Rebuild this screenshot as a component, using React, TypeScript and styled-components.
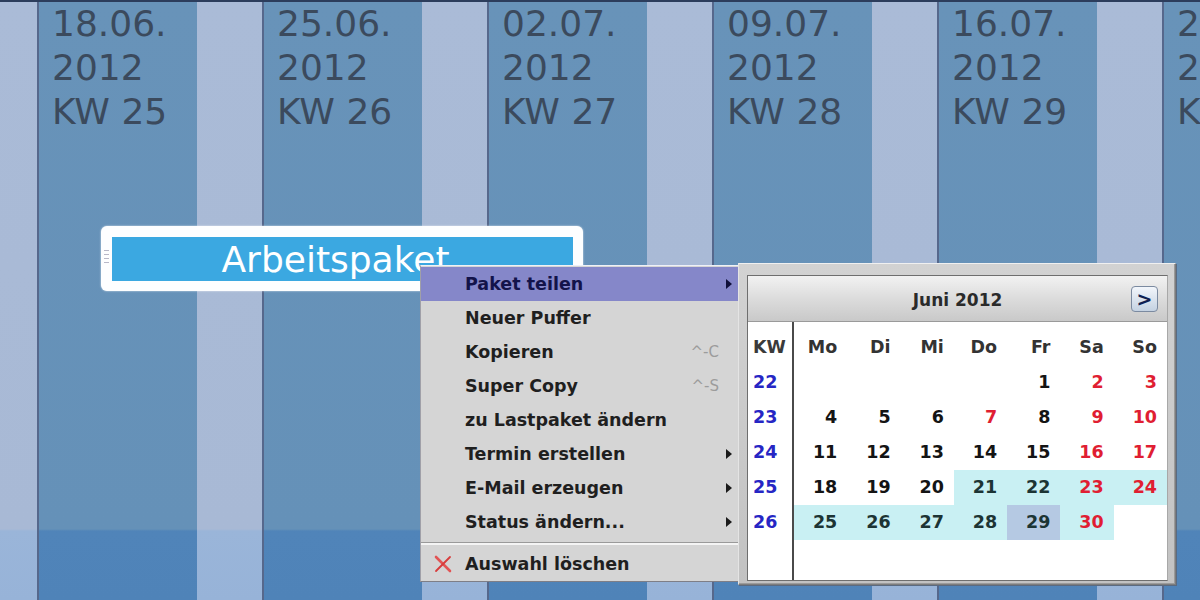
import React from 'react';
import styled, { createGlobalStyle } from 'styled-components';

const GlobalStyle = createGlobalStyle`
  html, body {
    margin: 0;
    padding: 0;
    overflow: hidden;
    background: #6792b8;
  }
`;

// the first week only shows its weekend strip at the left edge
const weeks = [
  { date: '', kw: 24 },
  { date: '18.06.', kw: 25 },
  { date: '25.06.', kw: 26 },
  { date: '02.07.', kw: 27 },
  { date: '09.07.', kw: 28 },
  { date: '16.07.', kw: 29 },
  { date: '23.07.', kw: 30 },
];

type MenuItem = { label: string; shortcut?: string; sub?: boolean; active?: boolean };

const menuItems: MenuItem[] = [
  { label: 'Paket teilen', sub: true, active: true },
  { label: 'Neuer Puffer' },
  { label: 'Kopieren', shortcut: '^-C' },
  { label: 'Super Copy', shortcut: '^-S' },
  { label: 'zu Lastpaket ändern' },
  { label: 'Termin erstellen', sub: true },
  { label: 'E-Mail erzeugen', sub: true },
  { label: 'Status ändern...', sub: true },
];

const dayNames = ['Mo', 'Di', 'Mi', 'Do', 'Fr', 'Sa', 'So'];

const calendarRows: { kw: number; days: (number | null)[] }[] = [
  { kw: 22, days: [null, null, null, null, 1, 2, 3] },
  { kw: 23, days: [4, 5, 6, 7, 8, 9, 10] },
  { kw: 24, days: [11, 12, 13, 14, 15, 16, 17] },
  { kw: 25, days: [18, 19, 20, 21, 22, 23, 24] },
  { kw: 26, days: [25, 26, 27, 28, 29, 30, null] },
];

const holidays = [7];
const rangeStart = 21;
const rangeEnd = 30;
const selectedDay = 29;

const Screen = styled.div`
  position: relative;
  width: 1200px;
  height: 600px;
  overflow: hidden;
`;

const Board = styled.div`
  display: flex;
  height: 100%;
  margin-left: -188px;
  border-top: 2px solid #2c3d5c;
  box-sizing: border-box;
`;

const Week = styled.div`
  display: flex;
  flex: 0 0 225px;
  box-sizing: border-box;
  border-left: 2px solid #56688c;
`;

const Workdays = styled.div`
  width: 158px;
  padding-left: 13px;
  box-sizing: border-box;
  background: linear-gradient(to bottom, #6893b9 0, #6591b8 527px, #5084b9 529px, #4f83b8 100%);
  font-family: 'DejaVu Sans', Verdana, sans-serif;
  font-size: 36px;
  line-height: 44px;
  color: #3b4a5d;
  white-space: nowrap;
`;

const Weekend = styled.div`
  flex: 1;
  background: linear-gradient(to bottom, #aabbd7 0, #a8b9d5 527px, #9ab5d9 529px, #97b3d8 100%);
`;

const TaskBar = styled.div`
  position: absolute;
  left: 101px;
  top: 226px;
  width: 482px;
  height: 65px;
  padding: 11px 10px 10px 11px;
  box-sizing: border-box;
  background: #fdfeff;
  border-radius: 6px;
  box-shadow: 0 0 2px rgba(255, 255, 255, 0.8);
`;

const TaskFill = styled.div`
  height: 100%;
  background: #3ba8e1;
  display: flex;
  align-items: center;
  justify-content: center;
  font-family: 'DejaVu Sans', Verdana, sans-serif;
  font-size: 36px;
  color: #ffffff;
  padding-right: 14px;
  box-sizing: border-box;
`;

const Grip = styled.div`
  position: absolute;
  left: 3px;
  top: 24px;
  display: flex;
  flex-direction: column;
  gap: 3px;
`;

const GripLine = styled.span`
  display: block;
  width: 5px;
  height: 1px;
  background: #b8b8c8;
`;

const Menu = styled.div`
  position: absolute;
  left: 420px;
  top: 265px;
  width: 318px;
  height: 317px;
  padding-top: 1px;
  box-sizing: border-box;
  background: #d5d5d5;
  border-top: 1px solid #eef0f8;
  border-bottom: 1px solid #7e7e86;
  border-left: 1px solid #a0a0a8;
  font-family: 'DejaVu Sans', 'Lucida Grande', sans-serif;
  font-size: 17.5px;
  font-weight: bold;
`;

const MenuRow = styled.div<{ $active?: boolean }>`
  position: relative;
  display: flex;
  align-items: center;
  height: 34px;
  padding: 0 2px 0 44px;
  background: ${(p) => (p.$active ? '#8587c9' : 'transparent')};
  color: ${(p) => (p.$active ? '#13134a' : '#1f1f1f')};
`;

const MenuLabel = styled.span`
  flex: 1;
  white-space: nowrap;
`;

const Shortcut = styled.span`
  color: #9c9c9c;
  font-weight: normal;
  font-size: 15px;
  margin-right: 3px;
`;

const ArrowSlot = styled.span`
  width: 14px;
  display: flex;
  justify-content: center;
`;

const Arrow = styled.span<{ $active?: boolean }>`
  width: 0;
  height: 0;
  border-top: 5px solid transparent;
  border-bottom: 5px solid transparent;
  border-left: 6px solid ${(p) => (p.$active ? '#10103a' : '#1a1a1a')};
`;

const MenuSeparator = styled.div`
  height: 8px;
  display: flex;
  flex-direction: column;
  justify-content: center;
  &::before {
    content: '';
    display: block;
    height: 1px;
    background: #9a9a9a;
  }
  &::after {
    content: '';
    display: block;
    height: 2px;
    background: #f4f4f4;
  }
`;

const MenuIcon = styled.span`
  position: absolute;
  left: 12px;
  top: 8px;
  display: flex;
`;

const Calendar = styled.div`
  position: absolute;
  left: 738px;
  top: 263px;
  width: 438px;
  height: 322px;
  padding: 11px 7px 5px 8px;
  box-sizing: border-box;
  background: linear-gradient(to bottom, #d2d2d2, #c2c2c2);
  border: 1px solid #7c7c7c;
  border-top-color: #f0f0f0;
  border-left-color: #e4e4e4;
  box-shadow: inset -1px -1px 0 #9a9a9a, 1px 1px 0 #5a6a80;
`;

const CalendarInner = styled.div`
  height: 100%;
  display: flex;
  flex-direction: column;
  border: 1px solid #6e6e6e;
  border-right-color: #a8a8a8;
  background: #ffffff;
`;

const CalendarHeader = styled.div`
  position: relative;
  height: 46px;
  flex: 0 0 46px;
  display: flex;
  align-items: center;
  justify-content: center;
  padding-top: 3px;
  box-sizing: border-box;
  background: linear-gradient(to bottom, #f2f2f2, #dcdcdc 50%, #c9c9c9);
  border-bottom: 1px solid #9a9a9a;
  font-family: 'DejaVu Sans', Tahoma, sans-serif;
  font-size: 17px;
  font-weight: bold;
  color: #2a2a2a;
`;

const NextButton = styled.div`
  position: absolute;
  right: 9px;
  top: 10px;
  width: 27px;
  height: 26px;
  display: flex;
  align-items: center;
  justify-content: center;
  box-sizing: border-box;
  border: 1px solid #7b8aa0;
  border-radius: 4px;
  background: linear-gradient(to bottom, #f2f6fb, #c4d2e2);
  color: #0f1f52;
  font-size: 19px;
  font-weight: bold;
`;

const CalendarBody = styled.div`
  flex: 1;
  display: flex;
  font-family: 'DejaVu Sans', Tahoma, sans-serif;
  font-size: 17.5px;
  font-weight: bold;
`;

const KwColumn = styled.div`
  width: 44px;
  padding-top: 8px;
  border-right: 2px solid #4a4a4a;
`;

const DaysGrid = styled.div`
  flex: 1;
  padding-top: 8px;
  display: grid;
  grid-template-columns: repeat(7, 1fr);
  grid-auto-rows: 35px;
  align-content: start;
`;

const Cell = styled.div`
  height: 35px;
  line-height: 35px;
`;

const KwHead = styled(Cell)`
  padding-left: 5px;
  color: #3a3a3a;
`;

const KwNumber = styled(Cell)`
  padding-left: 5px;
  color: #2626c4;
`;

const DayHead = styled(Cell)`
  text-align: right;
  padding-right: 10px;
  color: #333333;
`;

const DayCell = styled(Cell)<{ $red: boolean; $range: 'none' | 'range' | 'selected' }>`
  text-align: right;
  padding-right: 10px;
  color: ${(p) => (p.$red ? '#e01e32' : p.$range === 'none' ? '#141414' : '#1c3434')};
  background: ${(p) =>
    p.$range === 'selected' ? '#b5c9e3' : p.$range === 'range' ? '#c9f0f3' : 'transparent'};
`;

const DeleteIcon = () => (
  <svg width="20" height="18" viewBox="0 0 20 18">
    <path d="M3 2 L17 16" stroke="#e25454" strokeWidth="2.6" strokeLinecap="round" />
    <path d="M17 2 L3 16" stroke="#d83c3c" strokeWidth="1.8" strokeLinecap="round" />
  </svg>
);

const App: React.FC = () => {
  return (
    <>
      <GlobalStyle />
      <Screen>
        <Board>
          {weeks.map((w) => (
            <Week key={w.kw}>
              <Workdays>
                {w.date && (
                  <>
                    {w.date}
                    <br />
                    2012
                    <br />
                    KW {w.kw}
                  </>
                )}
              </Workdays>
              <Weekend />
            </Week>
          ))}
        </Board>

        <TaskBar>
          <Grip>
            <GripLine />
            <GripLine />
            <GripLine />
            <GripLine />
          </Grip>
          <TaskFill>Arbeitspaket</TaskFill>
        </TaskBar>

        <Menu>
          {menuItems.map((item) => (
            <MenuRow key={item.label} $active={item.active}>
              <MenuLabel>{item.label}</MenuLabel>
              {item.shortcut && <Shortcut>{item.shortcut}</Shortcut>}
              <ArrowSlot>{item.sub && <Arrow $active={item.active} />}</ArrowSlot>
            </MenuRow>
          ))}
          <MenuSeparator />
          <MenuRow>
            <MenuIcon>
              <DeleteIcon />
            </MenuIcon>
            <MenuLabel>Auswahl löschen</MenuLabel>
            <ArrowSlot />
          </MenuRow>
        </Menu>

        <Calendar>
          <CalendarInner>
            <CalendarHeader>
              Juni 2012
              <NextButton>&gt;</NextButton>
            </CalendarHeader>
            <CalendarBody>
              <KwColumn>
                <KwHead>KW</KwHead>
                {calendarRows.map((r) => (
                  <KwNumber key={r.kw}>{r.kw}</KwNumber>
                ))}
              </KwColumn>
              <DaysGrid>
                {dayNames.map((d) => (
                  <DayHead key={d}>{d}</DayHead>
                ))}
                {calendarRows.map((r) =>
                  r.days.map((d, i) => {
                    const red = d !== null && (i >= 5 || holidays.includes(d));
                    const range =
                      d === null
                        ? 'none'
                        : d === selectedDay
                        ? 'selected'
                        : d >= rangeStart && d <= rangeEnd
                        ? 'range'
                        : 'none';
                    return (
                      <DayCell key={`${r.kw}-${i}`} $red={red} $range={range}>
                        {d ?? ''}
                      </DayCell>
                    );
                  }),
                )}
              </DaysGrid>
            </CalendarBody>
          </CalendarInner>
        </Calendar>
      </Screen>
    </>
  );
};

export default App;
